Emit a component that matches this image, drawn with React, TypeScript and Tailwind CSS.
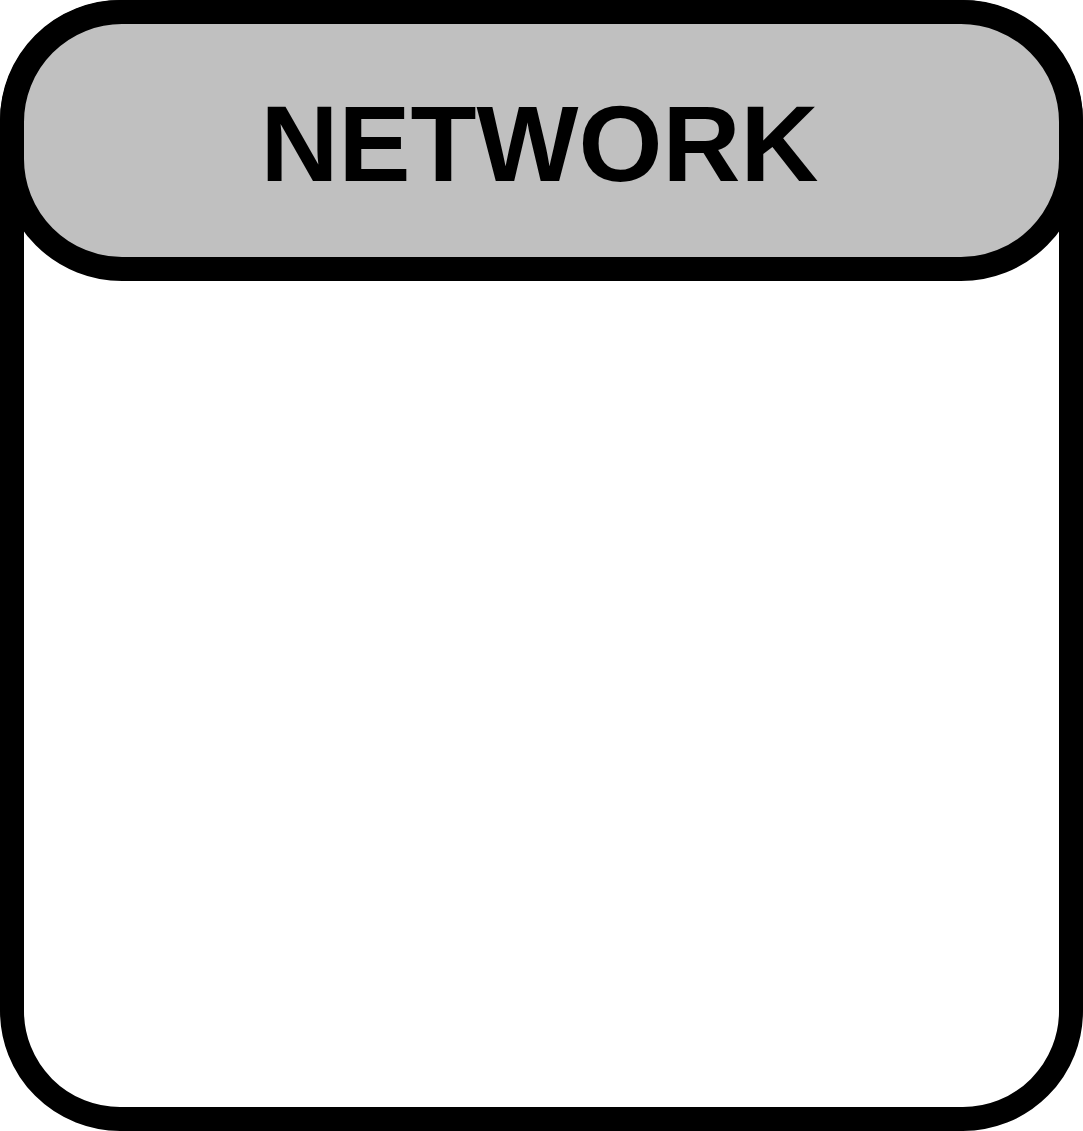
export default function App() {
  return (
    <div className="w-[1083px] h-[1131px] bg-white">
      <div className="w-full h-full flex flex-col border-[24px] border-black rounded-[120px] bg-white">
        <div className="-mx-[24px] -mt-[24px] h-[281px] shrink-0 flex items-center justify-center border-[24px] border-black rounded-[122px] bg-[#c0c0c0]">
          <h1
            className="text-[108px] leading-none font-bold text-black pt-[6px] pr-[4px]"
            style={{ fontFamily: '"Liberation Sans", Arial, sans-serif', fontKerning: 'none' }}
          >
            NETWORK
          </h1>
        </div>
        <div className="flex-1" />
      </div>
    </div>
  );
}
